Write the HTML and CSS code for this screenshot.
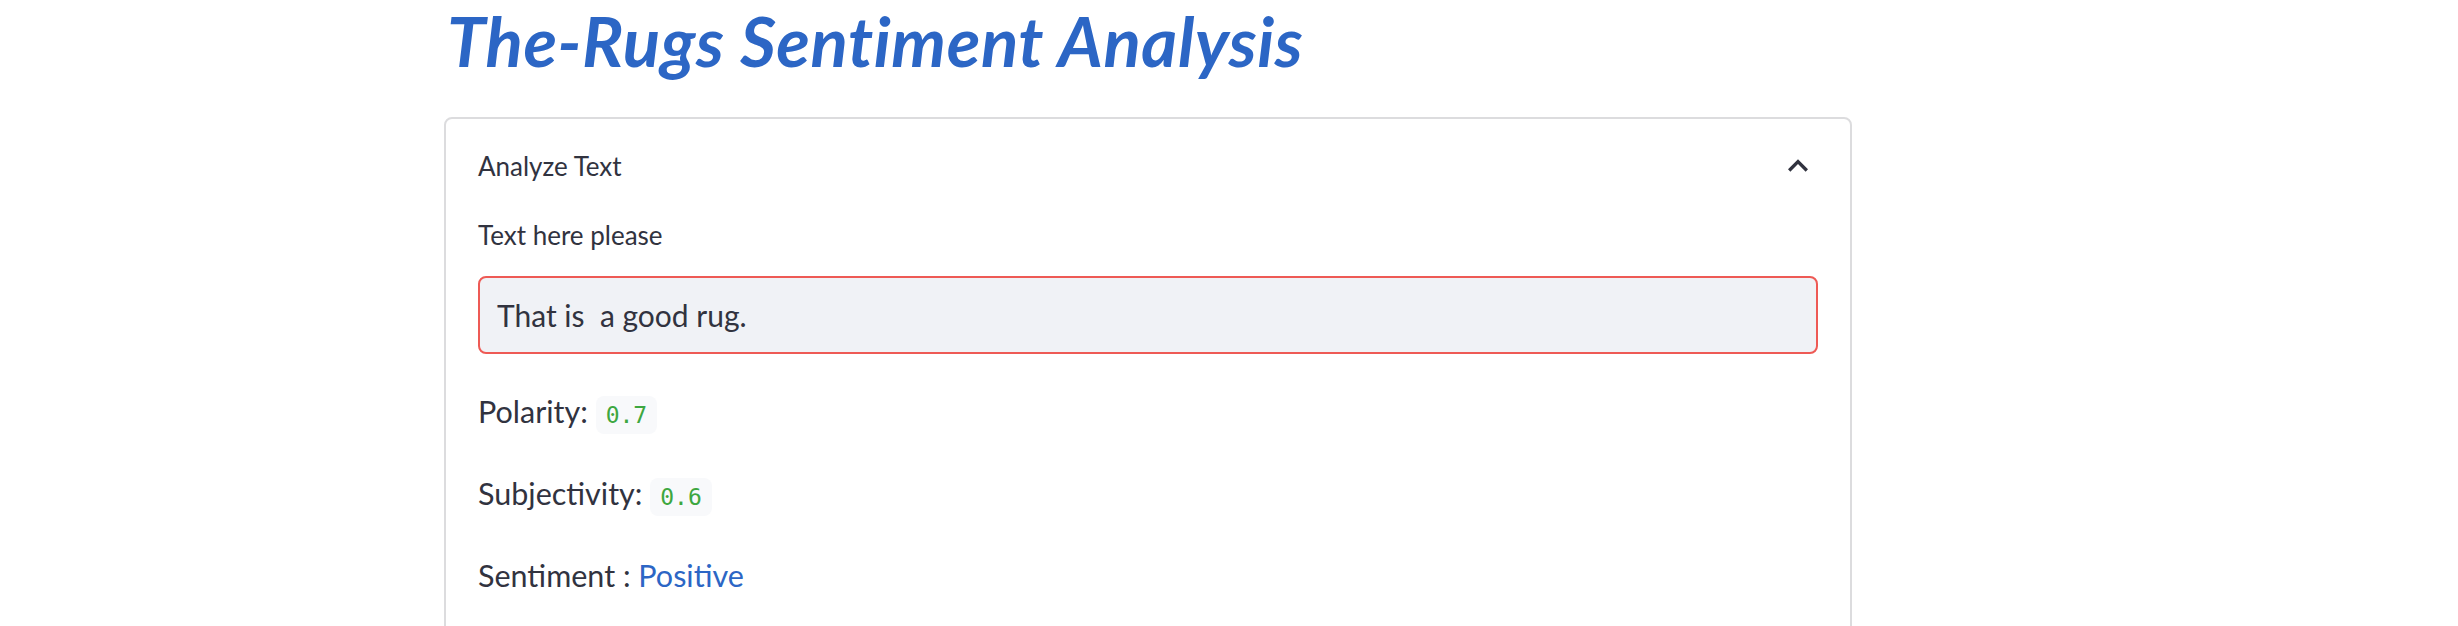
FILE: index.html
```html
<!DOCTYPE html>
<html lang="en">
<head>
<meta charset="utf-8">
<title>The-Rugs Sentiment Analysis</title>
<link rel="stylesheet" href="styles.css">
</head>
<body>
<main class="page">
  <h1 class="title">The-Rugs Sentiment Analysis</h1>
  <section class="expander">
    <div class="expander-head">
      <span class="expander-label">Analyze Text</span>
      <svg class="chevron" viewBox="0 0 24 24" width="40" height="40" aria-hidden="true"><path d="M12 8l-6 6 1.41 1.41L12 10.83l4.59 4.58L18 14z" fill="#31333f"/></svg>
    </div>
    <div class="expander-body">
      <label class="field-label">Text here please</label>
      <div class="text-input">That is&nbsp; a good rug.</div>
      <div class="results">
        <p class="line">Polarity: <code class="val">0.7</code></p>
        <p class="line">Subjectivity: <code class="val">0.6</code></p>
        <p class="line">Sentiment : <span class="positive">Positive</span></p>
      </div>
    </div>
  </section>
</main>
</body>
</html>
```

FILE: styles.css
```css
html, body {
  margin: 0;
  padding: 0;
  background: #ffffff;
}
body {
  font-family: "Lato", "Noto Sans", sans-serif;
  color: #31333f;
  height: 626px;
  overflow: hidden;
}
.page {
  width: 1408px;
  margin-left: 444px;
  display: flex;
  flex-direction: column;
}
.title {
  margin: 0 0 35px 3px;
  font-size: 69px;
  line-height: 82px;
  font-weight: 700;
  font-style: italic;
  color: #2c66c5;
  letter-spacing: 0.6px;
}
.expander {
  border: 2px solid #dcdcde;
  border-radius: 8px;
  padding: 0 32px;
  min-height: 560px;
}
.expander-head {
  display: flex;
  align-items: center;
  justify-content: space-between;
  height: 40px;
  padding-top: 27px;
}
.expander-label {
  font-size: 26px;
  line-height: 40px;
}
.chevron {
  display: block;
}
.expander-body {
  display: flex;
  flex-direction: column;
  padding-top: 29px;
}
.field-label {
  font-size: 26px;
  line-height: 40px;
}
.text-input {
  margin-top: 21px;
  height: 74px;
  box-sizing: content-box;
  border: 2px solid #ee5a55;
  border-radius: 8px;
  background: #f0f2f6;
  padding: 0 17px;
  font-size: 30px;
  line-height: 74px;
  color: #31333f;
  white-space: pre;
}
.results {
  display: flex;
  flex-direction: column;
  gap: 32px;
  margin-top: 32px;
}
.line {
  margin: 0;
  font-size: 30.5px;
  line-height: 50px;
}
.val {
  font-family: "DejaVu Sans Mono", "Liberation Mono", monospace;
  font-size: 23px;
  line-height: 1;
  color: #3da740;
  background: #f8f9fb;
  border-radius: 8px;
  padding: 6px 10px;
}
.positive {
  color: #2c66c5;
}
```
